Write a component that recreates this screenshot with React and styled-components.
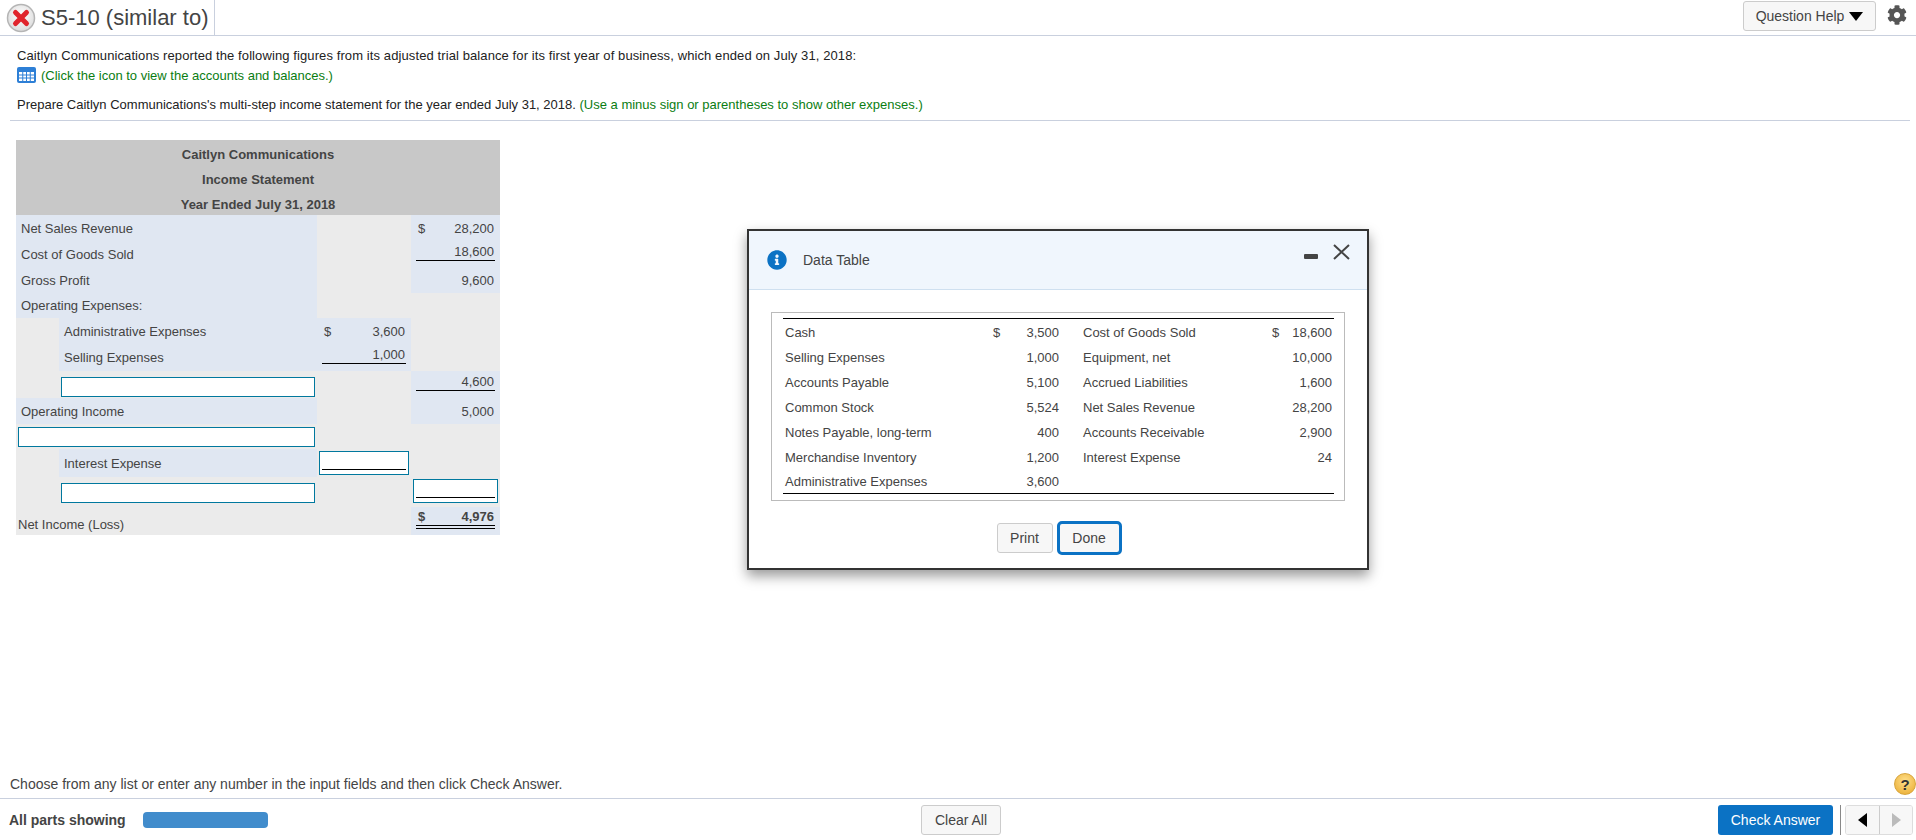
import React from 'react';
import styled, { createGlobalStyle } from 'styled-components';
import { FaCog, FaInfoCircle } from 'react-icons/fa';

const GlobalStyle = createGlobalStyle`
  html, body {
    margin: 0;
    padding: 0;
    background: #fff;
  }
  body {
    font-family: "Liberation Sans", Arial, sans-serif;
    font-size: 13px;
    color: #222;
  }
`;

const statementRows = [
  { kind: 'main', label: 'Net Sales Revenue', h: 26, total: { sign: '$', value: '28,200' } },
  { kind: 'main', label: 'Cost of Goods Sold', h: 27, total: { value: '18,600', line: true } },
  { kind: 'main', label: 'Gross Profit', h: 25, total: { value: '9,600' } },
  { kind: 'main', label: 'Operating Expenses:', h: 25 },
  { kind: 'sub', label: 'Administrative Expenses', h: 26, sub: { sign: '$', value: '3,600' } },
  { kind: 'sub', label: 'Selling Expenses', h: 27, sub: { value: '1,000', line: true } },
  { kind: 'subInput', h: 27, inputTop: 5, total: { value: '4,600', line: true } },
  { kind: 'main', label: 'Operating Income', h: 26, total: { value: '5,000' } },
  { kind: 'mainInput', h: 25 },
  { kind: 'sub', label: 'Interest Expense', h: 28, subInput: true },
  { kind: 'subInput', h: 30, inputTop: 2, totalInput: true },
  { kind: 'plain', label: 'Net Income (Loss)', h: 28, total: { sign: '$', value: '4,976', bold: true, double: true } },
];

const dataRows = [
  ['Cash', '$', '3,500', 'Cost of Goods Sold', '$', '18,600'],
  ['Selling Expenses', '', '1,000', 'Equipment, net', '', '10,000'],
  ['Accounts Payable', '', '5,100', 'Accrued Liabilities', '', '1,600'],
  ['Common Stock', '', '5,524', 'Net Sales Revenue', '', '28,200'],
  ['Notes Payable, long-term', '', '400', 'Accounts Receivable', '', '2,900'],
  ['Merchandise Inventory', '', '1,200', 'Interest Expense', '', '24'],
  ['Administrative Expenses', '', '3,600', '', '', ''],
];

const WrongIcon = () => (
  <svg width="30" height="30" viewBox="0 0 30 30">
    <defs>
      <radialGradient id="wrongFill" cx="50%" cy="40%" r="60%">
        <stop offset="0%" stopColor="#ffffff" />
        <stop offset="100%" stopColor="#dcdcdc" />
      </radialGradient>
    </defs>
    <circle cx="15" cy="15" r="13.5" fill="url(#wrongFill)" stroke="#b5b5b5" strokeWidth="1.5" />
    <path d="M9.5 9.5 L20.5 20.5 M20.5 9.5 L9.5 20.5" stroke="#e0242c" strokeWidth="5" strokeLinecap="round" />
  </svg>
);

const GridIcon = () => (
  <svg width="19" height="16" viewBox="0 0 19 16">
    <rect x="0" y="0" width="19" height="16" rx="2" fill="#2d7fd6" />
    <path d="M2 5 H17 V14 H2 Z" fill="#ffffff" />
    <path d="M2 8 H17 M2 11 H17 M5.75 5 V14 M9.5 5 V14 M13.25 5 V14" stroke="#2d7fd6" strokeWidth="1" />
  </svg>
);

const Amount = ({ cell }) => (
  <AmountBox $line={cell.line} $double={cell.double} $bold={cell.bold}>
    <span>{cell.sign}</span>
    <span>{cell.value}</span>
  </AmountBox>
);

const StatementRow = ({ row }) => {
  const subCell = row.subInput ? (
    <Cell>
      <AnswerBox $amount><AnswerLine /></AnswerBox>
    </Cell>
  ) : (
    <Cell $blue={!!row.sub}>{row.sub && <Amount cell={row.sub} />}</Cell>
  );

  const totalCell = row.totalInput ? (
    <Cell>
      <AnswerBox $amount $bottom={2}><AnswerLine /></AnswerBox>
    </Cell>
  ) : (
    <Cell $blue={!!row.total}>{row.total && <Amount cell={row.total} />}</Cell>
  );

  return (
    <tr style={{ height: row.h }}>
      {row.kind === 'main' && <LabelCell colSpan={2} $blue>{row.label}</LabelCell>}
      {row.kind === 'plain' && <LabelCell colSpan={2} $low>{row.label}</LabelCell>}
      {row.kind === 'sub' && (
        <>
          <Cell />
          <LabelCell $blue $sub>{row.label}</LabelCell>
        </>
      )}
      {row.kind === 'subInput' && (
        <>
          <Cell />
          <Cell><AnswerBox $top={row.inputTop} /></Cell>
        </>
      )}
      {row.kind === 'mainInput' && (
        <Cell colSpan={2}><AnswerBox /></Cell>
      )}
      {subCell}
      {totalCell}
    </tr>
  );
};

export default function App() {
  return (
    <Page>
      <GlobalStyle />
      <TopBar>
        <TitleBlock>
          <WrongIcon />
          <Title>S5-10 (similar to)</Title>
        </TitleBlock>
        <TopActions>
          <HelpButton>
            Question Help
            <DownArrow />
          </HelpButton>
          <FaCog size={20} color="#555" />
        </TopActions>
      </TopBar>

      <Main>
        <Prompt>
          <Line $spread>
            Caitlyn Communications reported the following figures from its adjusted trial balance for its first year of business, which ended on July 31, 2018:
          </Line>
          <Line>
            <GridIcon />
            <Green>(Click the icon to view the accounts and balances.)</Green>
          </Line>
          <Line $gap>
            Prepare Caitlyn Communications's multi-step income statement for the year ended July 31, 2018.&nbsp;
            <Green>(Use a minus sign or parentheses to show other expenses.)</Green>
          </Line>
        </Prompt>

        <Statement>
          <colgroup>
            <col width="43" />
            <col width="258" />
            <col width="94" />
            <col width="89" />
          </colgroup>
          <thead>
            <HeadRow><HeadCell colSpan={4}>Caitlyn Communications</HeadCell></HeadRow>
            <HeadRow><HeadCell colSpan={4}>Income Statement</HeadCell></HeadRow>
            <HeadRow><HeadCell colSpan={4}>Year Ended July 31, 2018</HeadCell></HeadRow>
          </thead>
          <tbody>
            {statementRows.map((row, i) => (
              <StatementRow key={i} row={row} />
            ))}
          </tbody>
        </Statement>
      </Main>

      <Hint>
        Choose from any list or enter any number in the input fields and then click Check Answer.
        <HelpBadge>?</HelpBadge>
      </Hint>

      <BottomBar>
        <Parts>
          <PartsLabel>All parts showing</PartsLabel>
          <PartsBar />
        </Parts>
        <ClearButton>Clear All</ClearButton>
        <BottomRight>
          <CheckButton>Check Answer</CheckButton>
          <Divider />
          <NavGroup>
            <NavButton><Triangle $dir="left" /></NavButton>
            <NavButton $disabled><Triangle $dir="right" $disabled /></NavButton>
          </NavGroup>
        </BottomRight>
      </BottomBar>

      <Dialog>
        <DialogHead>
          <FaInfoCircle size={20} color="#0b72c4" />
          <DialogTitle>Data Table</DialogTitle>
          <DialogControls>
            <MinimizeMark />
            <svg width="17" height="16" viewBox="0 0 17 16">
              <path d="M1 1 L16 15 M16 1 L1 15" stroke="#444" strokeWidth="2" fill="none" />
            </svg>
          </DialogControls>
        </DialogHead>
        <DialogBody>
          <DataFrame>
            <DataTable>
              <colgroup>
                <col width="208" />
                <col width="70" />
                <col width="209" />
                <col width="64" />
              </colgroup>
              <tbody>
                {dataRows.map((r) => (
                  <tr key={r[0]}>
                    <DataLabel>{r[0]}</DataLabel>
                    <DataAmount><span>{r[1]}</span><span>{r[2]}</span></DataAmount>
                    <DataLabel $second>{r[3]}</DataLabel>
                    <DataAmount><span>{r[4]}</span><span>{r[5]}</span></DataAmount>
                  </tr>
                ))}
              </tbody>
            </DataTable>
          </DataFrame>
          <DialogButtons>
            <PrintButton>Print</PrintButton>
            <DoneButton>Done</DoneButton>
          </DialogButtons>
        </DialogBody>
      </Dialog>
    </Page>
  );
}

const Page = styled.div`
  position: relative;
  width: 1916px;
  height: 840px;
  display: flex;
  flex-direction: column;
  overflow: hidden;
`;

const TopBar = styled.header`
  height: 35px;
  flex: none;
  display: flex;
  justify-content: space-between;
  border-bottom: 1px solid #c9d0de;
`;

const TitleBlock = styled.div`
  display: flex;
  align-items: center;
  gap: 5px;
  width: 208px;
  padding-left: 6px;
  border-right: 1px solid #c9d0de;
`;

const Title = styled.h1`
  margin: 0;
  font-size: 22px;
  font-weight: 400;
  color: #444;
  white-space: nowrap;
`;

const TopActions = styled.div`
  display: flex;
  align-items: center;
  gap: 11px;
  padding: 0 9px 5px 0;
`;

const HelpButton = styled.button`
  width: 133px;
  height: 30px;
  margin-top: 2px;
  display: flex;
  align-items: center;
  justify-content: center;
  gap: 5px;
  font: 14px "Liberation Sans", Arial, sans-serif;
  color: #444;
  background: #f7f7f7;
  border: 1px solid #ccc;
  border-radius: 3px;
`;

const DownArrow = styled.span`
  width: 0;
  height: 0;
  border-left: 7px solid transparent;
  border-right: 7px solid transparent;
  border-top: 9px solid #000;
`;

const Main = styled.main`
  flex: 1;
  padding: 0 6px 0 10px;
`;

const Prompt = styled.section`
  padding: 9px 0 6px 7px;
  border-bottom: 1px solid #c9d0de;
  margin-bottom: 19px;
`;

const Line = styled.div`
  height: 20px;
  display: flex;
  align-items: center;
  white-space: pre-wrap;
  margin-top: ${(p) => (p.$gap ? '9px' : '0')};
  letter-spacing: ${(p) => (p.$spread ? '0.1px' : 'normal')};
  color: #222;
`;

const Green = styled.span`
  color: #0a7d12;

  svg + & {
    margin-left: 5px;
  }
`;

const Statement = styled.table`
  width: 484px;
  margin-left: 6px;
  border-collapse: collapse;
  table-layout: fixed;
  background: #ebebeb;
  color: #444;
`;

const HeadRow = styled.tr`
  height: 25px;
`;

const HeadCell = styled.th`
  box-sizing: border-box;
  height: 25px;
  padding: 4px 0 0;
  background: #c8c8c8;
  font-size: 13px;
  font-weight: 700;
  text-align: center;
  color: #444;
`;

const Cell = styled.td`
  padding: 0;
  background: ${(p) => (p.$blue ? '#e0e7f2' : 'transparent')};
`;

const LabelCell = styled(Cell)`
  padding-left: ${(p) => (p.$low ? '2px' : '5px')};
  padding-top: ${(p) => (p.$low ? '6px' : '0')};
  white-space: nowrap;
`;

const AmountBox = styled.div`
  display: flex;
  justify-content: space-between;
  margin: 0 5px ${(p) => (p.$line || p.$double ? '5px' : '0')};
  padding: 0 1px ${(p) => (p.$line || p.$double ? '1px' : '0')} 2px;
  line-height: 15px;
  font-weight: ${(p) => (p.$bold ? 700 : 400)};
  border-bottom: ${(p) => (p.$double ? '4px double #000' : p.$line ? '1px solid #000' : 'none')};
`;

const AnswerBox = styled.div`
  box-sizing: border-box;
  height: ${(p) => (p.$amount ? '24px' : '20px')};
  margin: ${(p) => p.$top || 0}px 2px ${(p) => p.$bottom || 0}px;
  background: #fff;
  border: 1px solid #00789e;
  position: relative;
`;

const AnswerLine = styled.div`
  position: absolute;
  left: 2px;
  right: 2px;
  bottom: 4px;
  height: 1px;
  background: #000;
`;

const Hint = styled.div`
  flex: none;
  height: 28px;
  padding: 0 0 0 10px;
  display: flex;
  align-items: center;
  justify-content: space-between;
  font-size: 14px;
  color: #444;
  border-bottom: 1px solid #c9d0de;
  position: relative;
`;

const HelpBadge = styled.span`
  width: 22px;
  height: 22px;
  position: absolute;
  right: 0;
  top: 3px;
  border-radius: 50%;
  display: flex;
  align-items: center;
  justify-content: center;
  font-size: 15px;
  font-weight: 700;
  color: #333;
  background: radial-gradient(circle at 50% 35%, #ffdf8a, #e8a92c);
  border: 1px solid #d8a53c;
  box-sizing: border-box;
`;

const BottomBar = styled.footer`
  flex: none;
  height: 41px;
  box-sizing: border-box;
  display: grid;
  grid-template-columns: 1fr auto 1fr;
  align-items: center;
  padding: 6px 3px 5px 9px;
`;

const Parts = styled.div`
  display: flex;
  align-items: center;
  gap: 17px;
`;

const PartsLabel = styled.span`
  font-size: 14px;
  font-weight: 700;
  color: #444;
`;

const PartsBar = styled.div`
  width: 125px;
  height: 16px;
  background: #418ccc;
  border-radius: 4px;
`;

const ClearButton = styled.button`
  width: 80px;
  height: 30px;
  font: 14px "Liberation Sans", Arial, sans-serif;
  color: #444;
  background: #f7f7f7;
  border: 1px solid #ccc;
  border-radius: 3px;
`;

const BottomRight = styled.div`
  display: flex;
  align-items: center;
  justify-content: flex-end;
`;

const CheckButton = styled.button`
  width: 115px;
  height: 30px;
  font: 14px "Liberation Sans", Arial, sans-serif;
  color: #fff;
  background: #0b72c4;
  border: none;
  border-radius: 3px;
`;

const Divider = styled.div`
  width: 1px;
  height: 30px;
  margin: 0 4px 0 7px;
  background: #888;
`;

const NavGroup = styled.div`
  display: flex;
  border: 1px solid #ddd;
  border-radius: 3px;
  overflow: hidden;
`;

const NavButton = styled.div`
  box-sizing: border-box;
  width: 33px;
  height: 28px;
  display: flex;
  align-items: center;
  justify-content: center;
  background: #f7f7f7;
  border-left: ${(p) => (p.$disabled ? '1px solid #ccc' : 'none')};
`;

const Triangle = styled.span`
  width: 0;
  height: 0;
  border-top: 7px solid transparent;
  border-bottom: 7px solid transparent;
  border-left: ${(p) => (p.$dir === 'right' ? `9px solid ${p.$disabled ? '#bbb' : '#000'}` : 'none')};
  border-right: ${(p) => (p.$dir === 'left' ? '9px solid #000' : 'none')};
`;

const Dialog = styled.div`
  position: absolute;
  left: 747px;
  top: 229px;
  width: 622px;
  height: 341px;
  box-sizing: border-box;
  background: #fff;
  border: 2px solid #333;
  box-shadow: 0 6px 12px rgba(0, 0, 0, 0.4);
  display: flex;
  flex-direction: column;
`;

const DialogHead = styled.div`
  height: 58px;
  flex: none;
  display: flex;
  align-items: center;
  padding: 0 17px 0 18px;
  background: #f0f6fd;
  border-bottom: 1px solid #cfe0f0;
`;

const DialogTitle = styled.span`
  margin-left: 16px;
  font-size: 14px;
  color: #444;
`;

const DialogControls = styled.div`
  margin-left: auto;
  display: flex;
  align-items: center;
  gap: 15px;
  padding-bottom: 16px;
`;

const MinimizeMark = styled.span`
  width: 14px;
  height: 5px;
  margin-top: 9px;
  border-radius: 1px;
  background: #444;
`;

const DialogBody = styled.div`
  flex: 1;
  padding: 22px 22px 0 22px;
`;

const DataFrame = styled.div`
  box-sizing: border-box;
  height: 189px;
  padding: 5px 10px 0 11px;
  border: 1px solid #bbb;
`;

const DataTable = styled.table`
  width: 551px;
  border-collapse: collapse;
  table-layout: fixed;
  border-top: 1px solid #000;
  border-bottom: 1px solid #000;
  color: #444;

  tr {
    height: 25px;
  }
  td {
    padding-top: 3px;
  }
`;

const DataLabel = styled.td`
  padding-left: ${(p) => (p.$second ? '22px' : '2px')};
  white-space: nowrap;
`;

const DataAmount = styled.td`
  padding-left: 2px;
  padding-right: 2px;

  & > span:first-child {
    float: left;
  }
  & > span:last-child {
    float: right;
  }
`;

const DialogButtons = styled.div`
  display: flex;
  justify-content: center;
  align-items: center;
  gap: 4px;
  margin-top: 20px;
  padding-left: 2px;
`;

const PrintButton = styled.button`
  width: 56px;
  height: 30px;
  font: 14px "Liberation Sans", Arial, sans-serif;
  color: #444;
  background: #f7f7f7;
  border: 1px solid #ccc;
  border-radius: 3px;
`;

const DoneButton = styled(PrintButton)`
  width: 65px;
  height: 34px;
  border: 3px solid #0b72c4;
  border-radius: 5px;
`;
